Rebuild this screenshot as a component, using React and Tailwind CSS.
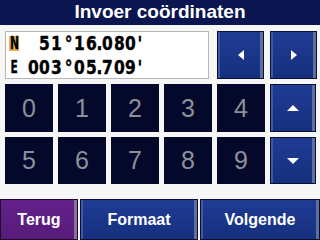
import React from "react";

const FONT = { fontFamily: '"Liberation Sans", Arial, sans-serif' };
const LCD = { fontFamily: '"DejaVu Sans Condensed", "DejaVu Sans", sans-serif' };

function Cell({ ch, w = "w-[11.5px]", align = "justify-center" }) {
  return (
    <span className={`flex ${w} ${align}`}>
      <span className="inline-block scale-x-[0.86] [-webkit-text-stroke:0.4px_#000]">{ch}</span>
    </span>
  );
}

function Digits({ parts }) {
  return (
    <div className="flex items-end text-[20px] font-bold leading-none text-black" style={LCD}>
      {parts.map((p, i) => {
        if (p === "°") return <Cell key={i} ch="°" w="w-[12px]" />;
        if (p === ".") return <Cell key={i} ch="." w="w-[5px]" />;
        if (p === "'") return <Cell key={i} ch="'" w="w-[10px]" align="justify-start" />;
        if (p === " ") return <Cell key={i} ch="" />;
        return <Cell key={i} ch={p} />;
      })}
    </div>
  );
}

function BlueBtn({ children, className = "" }) {
  return (
    <div className={`flex items-center justify-center border border-[#0a1035] bg-gradient-to-b from-[#1f3b94] to-[#16307e] shadow-[inset_2px_0_0_#3e58a8,inset_-3px_0_0_#5f6f9c] ${className}`}>
      {children}
    </div>
  );
}

function Tri({ dir }) {
  const pts = {
    left: "6,0 6,10 0,5",
    right: "0,0 0,10 6,5",
    up: "0,6 12,6 6,0",
    down: "0,0 12,0 6,6",
  }[dir];
  const horiz = dir === "left" || dir === "right";
  return (
    <svg width={horiz ? 6 : 12} height={horiz ? 10 : 6} viewBox={horiz ? "0 0 6 10" : "0 0 12 6"}>
      <polygon points={pts} fill="#ffffff" />
    </svg>
  );
}

function Key({ n }) {
  return (
    <div className="flex h-full w-[48px] items-center justify-center bg-[#04092b] text-[25px] leading-none text-[#8c9099]" style={FONT}>
      {n}
    </div>
  );
}

function Letter({ ch, bg = "" }) {
  return (
    <div className={`flex h-[15px] w-[10px] items-center justify-center text-[17px] font-bold leading-none text-black ${bg}`} style={LCD}>
      <span className="inline-block scale-x-[0.7] [-webkit-text-stroke:0.3px_#000]">{ch}</span>
    </div>
  );
}

export default function App() {
  return (
    <div className="flex h-[240px] w-[320px] flex-col overflow-hidden bg-[#f6f6f6]" style={FONT}>
      <div className="flex h-[25px] items-center justify-center bg-[#0b1550] text-[19px] font-bold text-white">
        Invoer coördinaten
      </div>

      <div className="mt-[6px] flex h-[48px] pl-[5px]">
        <div className="flex w-[204px] flex-col justify-center gap-[4px] border border-[#b5b5b5] bg-white pl-[3px]">
          <div className="flex items-center">
            <Letter ch="N" bg="bg-[#e8b14c]" />
            <div className="ml-[8.5px]">
              <Digits parts={[" ", "5", "1", "°", "1", "6", ".", "0", "8", "0", "'"]} />
            </div>
          </div>
          <div className="flex items-center">
            <Letter ch="E" />
            <div className="ml-[8.5px]">
              <Digits parts={["0", "0", "3", "°", "0", "5", ".", "7", "0", "9", "'"]} />
            </div>
          </div>
        </div>
        <BlueBtn className="ml-[8px] w-[47px]"><Tri dir="left" /></BlueBtn>
        <BlueBtn className="ml-[6px] w-[47px]"><Tri dir="right" /></BlueBtn>
      </div>

      <div className="mt-[5px] flex h-[48px] gap-[5px] pl-[5px]">
        {["0", "1", "2", "3", "4"].map((n) => <Key key={n} n={n} />)}
        <BlueBtn className="w-[46px]"><Tri dir="up" /></BlueBtn>
      </div>
      <div className="mt-[5px] flex h-[47px] gap-[5px] pl-[5px]">
        {["5", "6", "7", "8", "9"].map((n) => <Key key={n} n={n} />)}
        <BlueBtn className="w-[46px]"><Tri dir="down" /></BlueBtn>
      </div>

      <div className="mt-[15px] flex flex-1 gap-[2px] text-[16px] font-bold text-white">
        <div className="flex w-[78px] items-center justify-center border border-[#1e0830] bg-gradient-to-b from-[#63218a] to-[#571c7a] shadow-[inset_-3px_0_0_#8c6fa0]">
          Terug
        </div>
        <BlueBtn className="w-[118px]">Formaat</BlueBtn>
        <BlueBtn className="flex-1">Volgende</BlueBtn>
      </div>
    </div>
  );
}
